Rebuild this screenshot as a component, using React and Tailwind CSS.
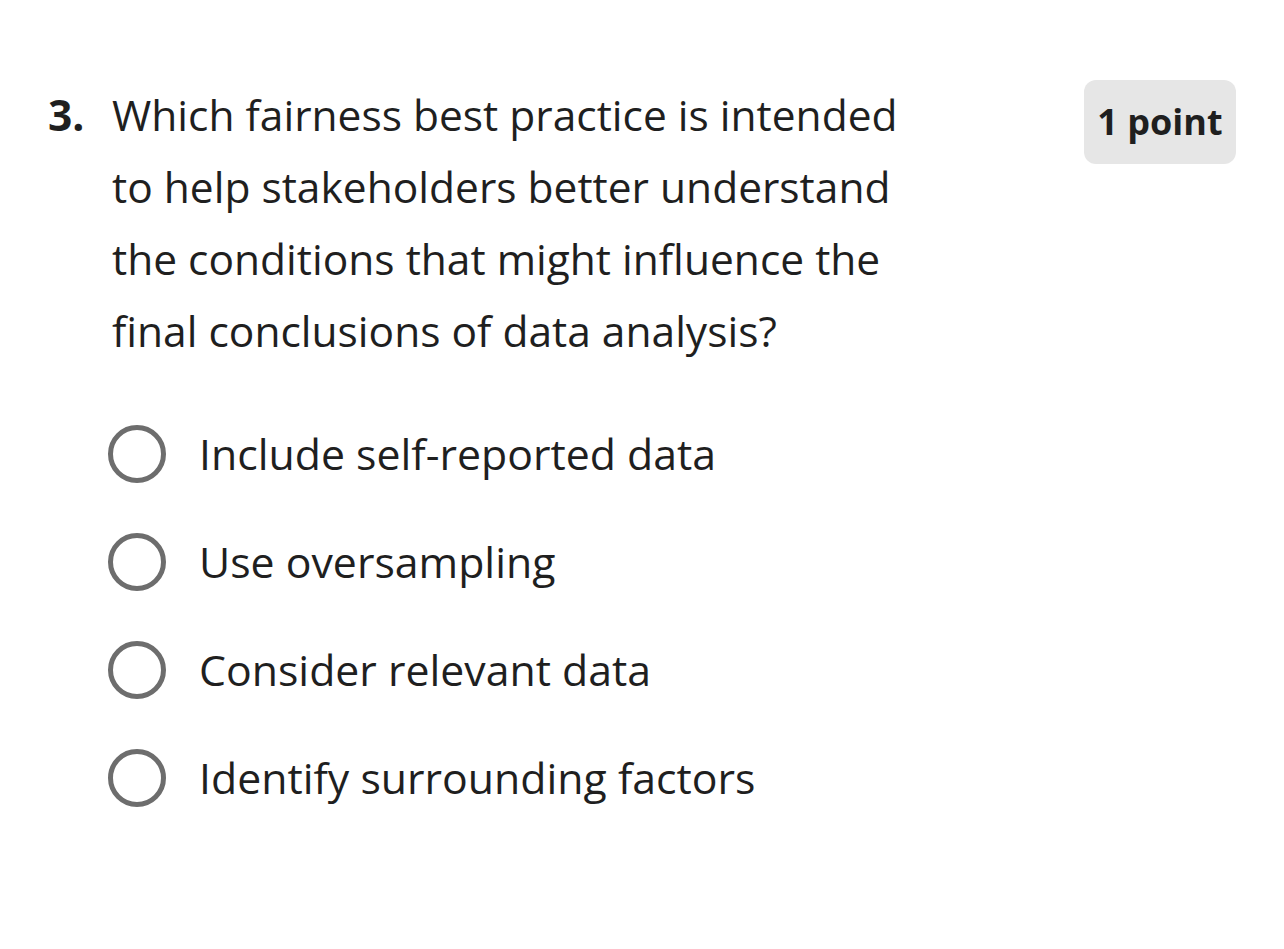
const options = [
  'Include self-reported data',
  'Use oversampling',
  'Consider relevant data',
  'Identify surrounding factors',
];

function Radio({ label }) {
  return (
    <label className="flex items-center gap-[33px] h-[58px] cursor-pointer">
      <span className="w-[58px] h-[58px] shrink-0 rounded-full border-[5px] border-[#6d6d6d] bg-white" />
      <span className="text-[42.8px] leading-[58px] text-[#1f1f1f]">{label}</span>
    </label>
  );
}

export default function App() {
  return (
    <div className="min-h-screen bg-white px-[48px] pt-[79px] font-['Open_Sans',sans-serif] text-[#1f1f1f]">
      <div className="flex items-start justify-between">
        <div className="flex">
          <span className="w-[64px] shrink-0 text-[42.5px] leading-[72px] font-bold">3.</span>
          <p className="w-[800px] text-[42.5px] leading-[72px]">
            Which fairness best practice is intended to help stakeholders better understand the conditions that might influence the final conclusions of data analysis?
          </p>
        </div>
        <div className="mt-[1px] flex h-[84px] w-[152px] items-center justify-center rounded-[12px] bg-[#e6e6e6] text-[36px] font-bold">
          1 point
        </div>
      </div>
      <div className="mt-[58px] ml-[60px] flex flex-col gap-[50px]">
        {options.map(o => <Radio key={o} label={o} />)}
      </div>
    </div>
  );
}
